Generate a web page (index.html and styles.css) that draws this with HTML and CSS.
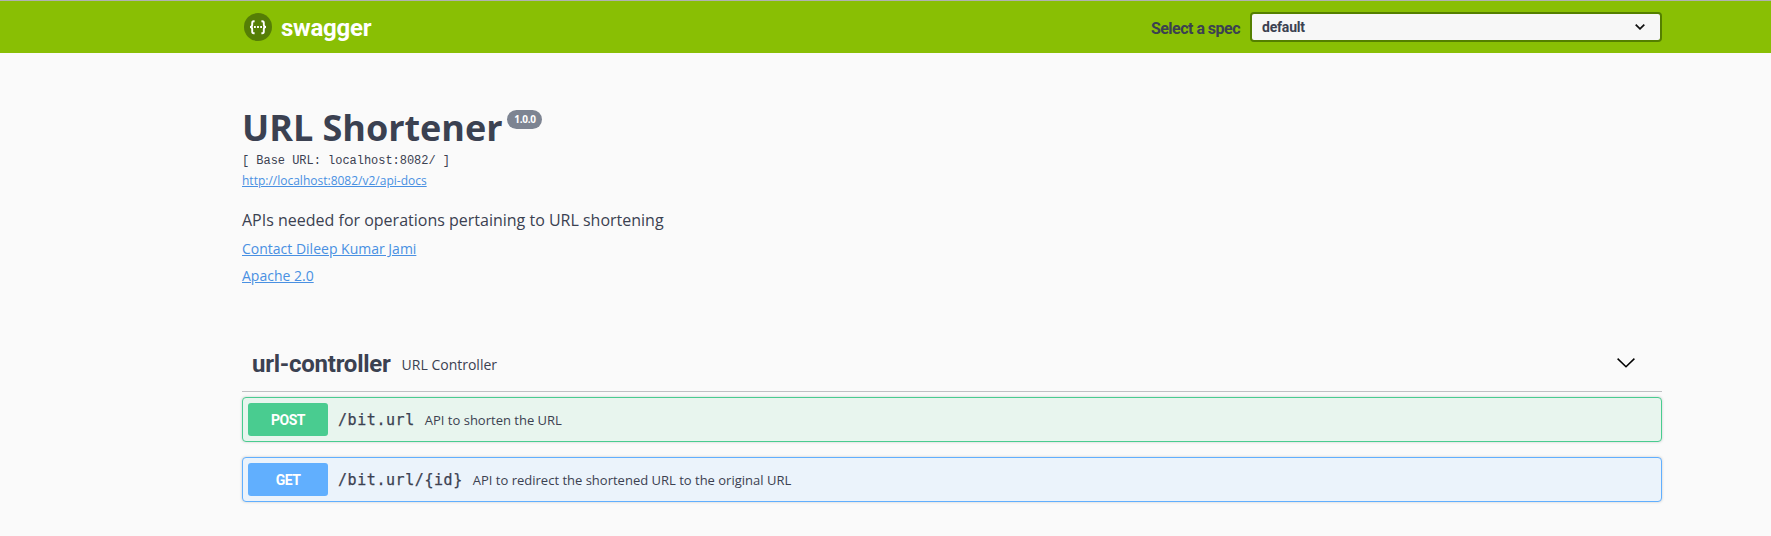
FILE: index.html
```html
<!DOCTYPE html>
<html lang="en">
<head>
<meta charset="utf-8">
<title>Swagger UI</title>
<link rel="stylesheet" href="styles.css">
</head>
<body>
<header class="topbar">
  <div class="wrapper topbar-row">
    <a class="brand">
      <svg class="logo" width="28" height="28" viewBox="0 0 28 28" fill="none" stroke="#fff">
        <circle cx="14" cy="14" r="14" fill="#557e06" stroke="none"/>
        <path d="M10.6 8.2H9.7Q8.2 8.2 8.2 10V11.8Q8.2 14 6 14Q8.2 14 8.2 16.2V18.5Q8.2 20.3 9.7 20.3H10.6M17.4 8.2H18.3Q19.8 8.2 19.8 10V11.8Q19.8 14 22 14Q19.8 14 19.8 16.2V18.5Q19.8 20.3 18.3 20.3H17.4" stroke-width="1.9"/>
        <path d="M10 14h1.8M13.1 14h1.8M16.2 14h1.8" stroke-width="1.8"/>
      </svg>
      <span class="brand-name">swagger</span>
    </a>
    <label class="spec"><span class="spec-label">Select a spec</span>
      <span class="select"><span class="select-value">default</span>
        <svg width="10" height="6" viewBox="0 0 10 6" fill="none" stroke="#111" stroke-width="1.8"><path d="M.7.7 5 4.8 9.3.7"/></svg>
      </span>
    </label>
  </div>
</header>
<main class="wrapper">
  <section class="info">
    <h1 class="title">URL Shortener<span class="version">1.0.0</span></h1>
    <div class="base-url">[ Base URL: localhost:8082/ ]</div>
    <a class="link docs">http://localhost:8082/v2/api-docs</a>
    <p class="description">APIs needed for operations pertaining to URL shortening</p>
    <a class="link meta">Contact Dileep Kumar Jami</a>
    <a class="link meta">Apache 2.0</a>
  </section>
  <section>
    <div class="tag">
      <h2 class="tag-name">url-controller</h2>
      <span class="tag-description">URL Controller</span>
      <svg class="tag-arrow" width="18" height="10" viewBox="0 0 18 10" fill="none" stroke="#000" stroke-width="1.5"><path d="M.6.6 9 8.8 17.4.6"/></svg>
    </div>
    <div class="operation post"><span class="method">POST</span><span class="path">/bit.url</span><span class="summary">API to shorten the URL</span></div>
    <div class="operation get"><span class="method">GET</span><span class="path">/bit.url/{id}</span><span class="summary">API to redirect the shortened URL to the original URL</span></div>
  </section>
</main>
</body>
</html>
```
FILE: styles.css
```css
* { box-sizing: border-box; }
body {
  margin: 0;
  background: #fafafa;
  color: #3b4151;
  font-family: "Open Sans", sans-serif;
}
.wrapper { width: 1420px; margin: 0 auto 0 242px; }
.topbar { height: 53px; background: #89bf04; border-top: 1px solid #b1b1b1; }
.topbar-row { display: flex; justify-content: space-between; height: 52px; }
.brand { display: flex; align-items: center; padding-left: 2px; color: #fff; }
.brand-name {
  margin: 2px 0 0 9px;
  font: bold 24px/30px Roboto, sans-serif;
  letter-spacing: -0.25px;
}
.spec { display: flex; align-items: center; }
.spec-label {
  margin: 3px 10px 0 0;
  font: bold 16px/20px Roboto, sans-serif;
  letter-spacing: -0.52px;
}
.select {
  display: flex;
  align-items: center;
  justify-content: space-between;
  width: 412px;
  height: 30px;
  padding: 0 15px 0 10px;
  border: 2px solid #547f00;
  border-radius: 4px;
  background: #f7f7f7;
}
.select-value { font: bold 14px/18px Roboto, sans-serif; letter-spacing: -0.2px; }
.info { display: flex; flex-direction: column; align-items: flex-start; padding-top: 50px; height: 275px; }
.title { display: flex; align-items: flex-start; margin: 0; font-size: 36px; line-height: 49px; letter-spacing: -0.04px; }
.version {
  width: 35px;
  height: 19px;
  margin: 7px 0 0 5px;
  border-radius: 10px;
  background: #7d8492;
  color: #fff;
  font-size: 10px;
  line-height: 19px;
  letter-spacing: -0.3px;
  text-align: center;
}
.base-url { margin-top: 1px; font: 12px/16px "Liberation Mono", monospace; letter-spacing: -0.03px; }
.link { color: #4990e2; text-decoration: underline; }
.docs { margin-top: 3px; font-size: 12px; line-height: 17px; }
.description { margin: 20px 0 0; font-size: 16px; line-height: 22px; }
.meta { margin-top: 8px; font-size: 14px; line-height: 19px; }
.tag {
  display: flex;
  align-items: center;
  height: 64px;
  padding: 9px 27px 0 10px;
  border-bottom: 1px solid #bfc0c3;
  margin-bottom: 5px;
}
.tag-name { margin: 0 11px 0 0; font: bold 24px/30px Roboto, sans-serif; letter-spacing: -0.25px; }
.tag-description { flex: 1; font-size: 14px; }
.tag-arrow { margin-bottom: 3px; }
.operation {
  display: flex;
  align-items: center;
  height: 45px;
  margin-bottom: 15px;
  padding: 0 5px;
  border: 1px solid;
  border-radius: 4px;
  box-shadow: 0 0 3px rgba(0, 0, 0, .19);
}
.post { border-color: #49cc90; background: #e8f5ee; }
.get { border-color: #61affe; background: #ebf3fb; }
.method {
  width: 80px;
  height: 33px;
  border-radius: 3px;
  color: #fff;
  font: bold 14px/35px Roboto, sans-serif;
  letter-spacing: -0.5px;
  text-align: center;
}
.post .method { background: #49cc90; }
.get .method { background: #61affe; }
.path {
  margin: 1px 10px 0;
  font: 15px/20px "DejaVu Sans Mono", monospace;
  letter-spacing: .57px;
  -webkit-text-stroke: .25px;
}
.summary { margin-top: 1px; font-size: 13px; }
```
